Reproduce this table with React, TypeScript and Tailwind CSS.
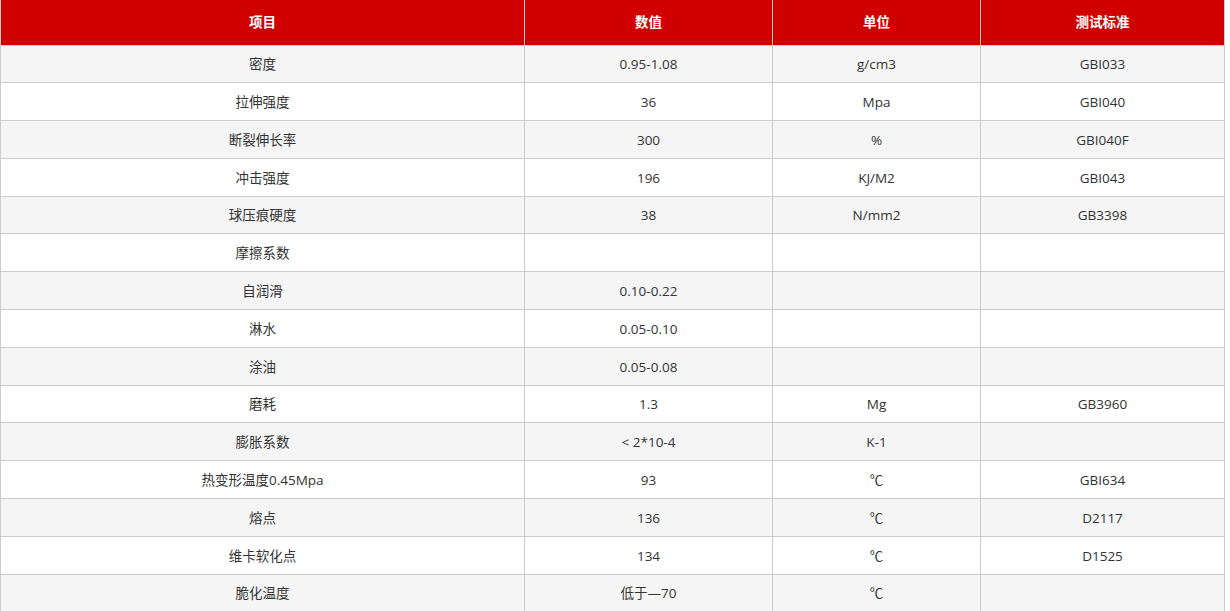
const rows: [string, string, string, string][] = [
  ['密度', '0.95-1.08', 'g/cm3', 'GBI033'],
  ['拉伸强度', '36', 'Mpa', 'GBI040'],
  ['断裂伸长率', '300', '%', 'GBI040F'],
  ['冲击强度', '196', 'KJ/M2', 'GBI043'],
  ['球压痕硬度', '38', 'N/mm2', 'GB3398'],
  ['摩擦系数', '', '', ''],
  ['自润滑', '0.10-0.22', '', ''],
  ['淋水', '0.05-0.10', '', ''],
  ['涂油', '0.05-0.08', '', ''],
  ['磨耗', '1.3', 'Mg', 'GB3960'],
  ['膨胀系数', '< 2*10-4', 'K-1', ''],
  ['热变形温度0.45Mpa', '93', '℃', 'GBI634'],
  ['熔点', '136', '℃', 'D2117'],
  ['维卡软化点', '134', '℃', 'D1525'],
  ['脆化温度', '低于—70', '℃', ''],
]

const headers = ['项目', '数值', '单位', '测试标准']

const App = () => {
  return (
    <div
      className="bg-white text-[#333] text-sm"
      style={{ fontFamily: '"Open Sans", "Noto Sans CJK SC", sans-serif' }}
    >
      <table className="w-[1224px] table-fixed border-collapse">
        <colgroup>
          <col className="w-[524px]" />
          <col className="w-[248px]" />
          <col className="w-[208px]" />
          <col className="w-[244px]" />
        </colgroup>
        <thead>
          <tr className="h-[45px] bg-[#d00000]">
            {headers.map((h) => (
              <th
                key={h}
                className="border-x border-[#ccc] p-0 pt-[1px] text-center text-[13.5px] font-bold text-white"
              >
                {h}
              </th>
            ))}
          </tr>
        </thead>
        <tbody>
          {rows.map((row, i) => (
            <tr key={row[0]} className={`h-[37.8px] ${i % 2 === 0 ? 'bg-[#f5f5f5]' : 'bg-white'}`}>
              {row.map((cell, j) => (
                <td key={j} className="border border-[#ccc] p-0 pt-[2px] text-center text-[13.5px]">
                  {cell}
                </td>
              ))}
            </tr>
          ))}
        </tbody>
      </table>
    </div>
  )
}

export default App
